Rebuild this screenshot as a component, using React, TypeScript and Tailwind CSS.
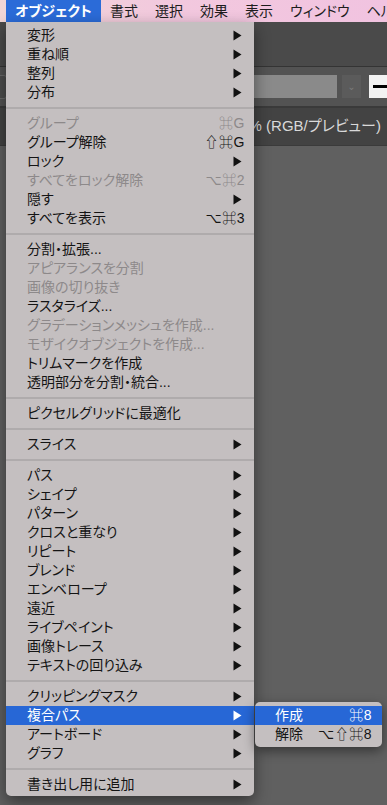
import React from 'react';

type Row =
  | { kind: 'sep' }
  | { kind: 'item'; label: string; sub?: boolean; key?: string; off?: boolean; hot?: boolean };

const ITEMS: Row[] = [
  { kind: 'item', label: '変形', sub: true },
  { kind: 'item', label: '重ね順', sub: true },
  { kind: 'item', label: '整列', sub: true },
  { kind: 'item', label: '分布', sub: true },
  { kind: 'sep' },
  { kind: 'item', label: 'グループ', key: '⌘G', off: true },
  { kind: 'item', label: 'グループ解除', key: '⇧⌘G' },
  { kind: 'item', label: 'ロック', sub: true },
  { kind: 'item', label: 'すべてをロック解除', key: '⌥⌘2', off: true },
  { kind: 'item', label: '隠す', sub: true },
  { kind: 'item', label: 'すべてを表示', key: '⌥⌘3' },
  { kind: 'sep' },
  { kind: 'item', label: '分割・拡張...' },
  { kind: 'item', label: 'アピアランスを分割', off: true },
  { kind: 'item', label: '画像の切り抜き', off: true },
  { kind: 'item', label: 'ラスタライズ...' },
  { kind: 'item', label: 'グラデーションメッシュを作成...', off: true },
  { kind: 'item', label: 'モザイクオブジェクトを作成...', off: true },
  { kind: 'item', label: 'トリムマークを作成' },
  { kind: 'item', label: '透明部分を分割・統合...' },
  { kind: 'sep' },
  { kind: 'item', label: 'ピクセルグリッドに最適化' },
  { kind: 'sep' },
  { kind: 'item', label: 'スライス', sub: true },
  { kind: 'sep' },
  { kind: 'item', label: 'パス', sub: true },
  { kind: 'item', label: 'シェイプ', sub: true },
  { kind: 'item', label: 'パターン', sub: true },
  { kind: 'item', label: 'クロスと重なり', sub: true },
  { kind: 'item', label: 'リピート', sub: true },
  { kind: 'item', label: 'ブレンド', sub: true },
  { kind: 'item', label: 'エンベロープ', sub: true },
  { kind: 'item', label: '遠近', sub: true },
  { kind: 'item', label: 'ライブペイント', sub: true },
  { kind: 'item', label: '画像トレース', sub: true },
  { kind: 'item', label: 'テキストの回り込み', sub: true },
  { kind: 'sep' },
  { kind: 'item', label: 'クリッピングマスク', sub: true },
  { kind: 'item', label: '複合パス', sub: true, hot: true },
  { kind: 'item', label: 'アートボード', sub: true },
  { kind: 'item', label: 'グラフ', sub: true },
  { kind: 'sep' },
  { kind: 'item', label: '書き出し用に追加', sub: true },
];

const FONT =
  "[font-family:'Liberation_Sans','Noto_Sans_CJK_JP','DejaVu_Sans',sans-serif] [font-feature-settings:'palt']";

function Arrow({ white }: { white?: boolean }) {
  return (
    <svg width="9" height="11" viewBox="0 0 9 11" className="shrink-0">
      <polygon points="0.5,0.5 8.5,5.5 0.5,10.5" fill={white ? '#ffffff' : '#111111'} />
    </svg>
  );
}

function MenuRow({ row }: { row: Extract<Row, { kind: 'item' }> }) {
  const color = row.hot ? 'text-white' : row.off ? 'text-[#8d898a]' : 'text-[#141414]';
  return (
    <div
      className={`flex h-[19px] items-center pl-[21px] pr-[12px] text-[14px] ${color} ${
        row.hot ? 'bg-[#2767d6]' : ''
      }`}
    >
      <span className="flex-1 whitespace-nowrap">{row.label}</span>
      {row.key && <span className="mr-[-3px] whitespace-nowrap tracking-[0.5px]">{row.key}</span>}
      {row.sub && <Arrow white={row.hot} />}
    </div>
  );
}

export default function App() {
  return (
    <div className={`relative h-[805px] w-[387px] overflow-hidden bg-[#606060] ${FONT}`}>
      {/* menu bar */}
      <div className="flex h-[22px] items-center overflow-hidden whitespace-nowrap bg-[linear-gradient(90deg,#f1d6d6,#f2c8de_45%,#f1c3e0)] text-[14px] text-[#1d1d1d]">
        <div className="ml-[6px] flex h-full w-[95px] shrink-0 items-center justify-center bg-[#2b6bd8] font-bold text-white">
          オブジェクト
        </div>
        <span className="ml-[9px] shrink-0">書式</span>
        <span className="ml-[17px] shrink-0">選択</span>
        <span className="ml-[17px] shrink-0">効果</span>
        <span className="ml-[17px] shrink-0">表示</span>
        <span className="ml-[17px] shrink-0">ウィンドウ</span>
        <span className="ml-[17px] shrink-0">ヘルプ</span>
      </div>

      {/* app chrome behind the menu */}
      <div className="h-[44px] bg-[#4a4a4a]" />
      <div className="h-px bg-[#343434]" />
      <div className="flex h-[39px] items-center bg-[#535353]">
        <div className="ml-[-4px] h-[24px] w-[11px] shrink-0 rounded-[3px] border border-[#6a6a6a] bg-[#4d4d4d]" />
        <div className="ml-[188px] h-[23px] w-[142px] shrink-0 bg-[#8a8a8a]" />
        <div className="ml-[5px] flex h-[23px] w-[19px] shrink-0 items-center justify-center bg-[#5b5b5b] text-[10px] text-[#7a7a7a]">
          ⌄
        </div>
        <div className="ml-[8px] flex h-[23px] flex-1 items-center bg-[#f2f2f2] pl-[4px]">
          <div className="h-[3px] w-[14px] bg-black" />
        </div>
      </div>
      <div className="h-[2px] bg-[#3a3a3a]" />
      <div className="flex h-[37px] items-center justify-end overflow-hidden bg-[#434343] pr-[6px] text-[15px] text-[#d9d9d9]">
        <span className="shrink-0 whitespace-nowrap">% (RGB/プレビュー)</span>
      </div>
      <div className="h-px bg-[#3b3b3b]" />

      {/* object menu */}
      <div className="absolute left-[6px] top-[22px] w-[248px] rounded-b-[5px] bg-[#c4bfc0] pb-[2px] pt-[4px] shadow-[0_6px_16px_rgba(0,0,0,0.45)]">
        {ITEMS.map((row, i) =>
          row.kind === 'sep' ? (
            <div key={i} className="flex h-[12px] items-center">
              <div className="h-[2px] w-full bg-[#afabac]" />
            </div>
          ) : (
            <MenuRow key={i} row={row} />
          ),
        )}
      </div>

      {/* submenu */}
      <div className="absolute left-[255px] top-[702px] w-[127px] rounded-[5px] bg-[#c4bfc0] pt-[4px] pb-[3px] text-[14px] shadow-[0_4px_12px_rgba(0,0,0,0.45)]">
        <div className="flex h-[19px] items-center justify-between bg-[#2767d6] pl-[20px] pr-[10px] text-white">
          <span>作成</span>
          <span className="tracking-[0.5px]">⌘8</span>
        </div>
        <div className="flex h-[19px] items-center justify-between pl-[20px] pr-[10px] text-[#141414]">
          <span>解除</span>
          <span className="tracking-[0.5px]">⌥⇧⌘8</span>
        </div>
      </div>
    </div>
  );
}
